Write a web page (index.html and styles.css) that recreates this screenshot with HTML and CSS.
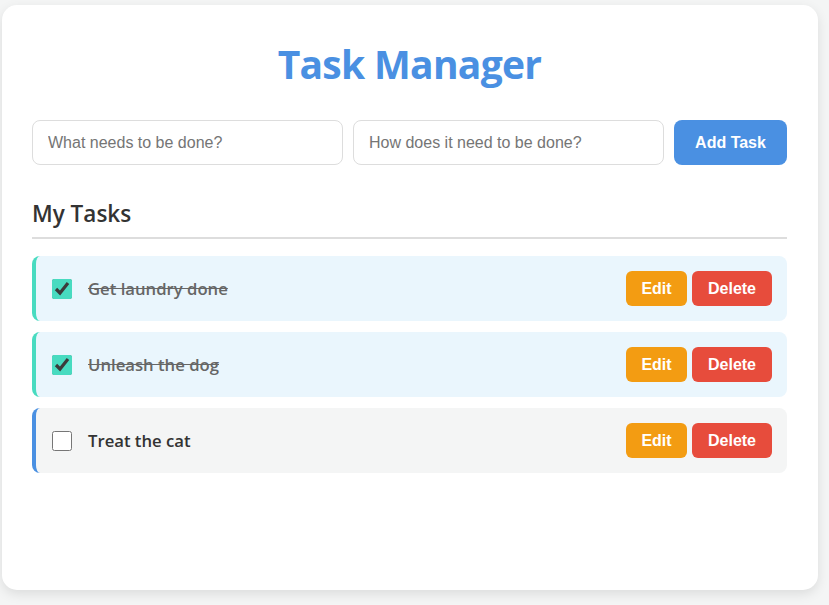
FILE: index.html
```html
<!DOCTYPE html>
<html lang="en">
<head>
<meta charset="utf-8">
<title>Task Manager</title>
<link rel="stylesheet" href="styles.css">
</head>
<body>
<div class="card">
  <h1 class="title">Task Manager</h1>
  <form class="add-form">
    <input class="field" type="text" placeholder="What needs to be done?">
    <input class="field" type="text" placeholder="How does it need to be done?">
    <button class="add-btn" type="button">Add Task</button>
  </form>
  <h2 class="section-title">My Tasks</h2>
  <ul class="task-list">
    <li class="task done">
      <input class="check" type="checkbox" checked>
      <span class="task-text">Get laundry done</span>
      <div class="actions"><button class="btn edit" type="button">Edit</button><button class="btn delete" type="button">Delete</button></div>
    </li>
    <li class="task done">
      <input class="check" type="checkbox" checked>
      <span class="task-text">Unleash the dog</span>
      <div class="actions"><button class="btn edit" type="button">Edit</button><button class="btn delete" type="button">Delete</button></div>
    </li>
    <li class="task">
      <input class="check" type="checkbox">
      <span class="task-text">Treat the cat</span>
      <div class="actions"><button class="btn edit" type="button">Edit</button><button class="btn delete" type="button">Delete</button></div>
    </li>
  </ul>
</div>
</body>
</html>
```
FILE: styles.css
```css
html, body {
  margin: 0;
  padding: 0;
  background: #f4f5f5;
}
body {
  padding: 5px 11px 15px 2px;
}
.card {
  width: 816px;
  height: 585px;
  box-sizing: border-box;
  background: #fff;
  border-radius: 15px;
  box-shadow: 0 4px 12px rgba(0, 0, 0, 0.1);
  padding: 30px 31px 30px 30px;
  font-family: "Open Sans", "Noto Sans", sans-serif;
  color: #333;
}
.title {
  margin: 1px 0 28px;
  text-align: center;
  font-size: 39px;
  line-height: 56px;
  font-weight: 700;
  color: #4a90e2;
  letter-spacing: -0.7px;
}
.add-form {
  display: flex;
  gap: 10px;
  margin: 0;
}
.field {
  flex: 1;
  height: 45px;
  box-sizing: border-box;
  border: 1px solid #ddd;
  border-radius: 8px;
  padding: 0 15px;
  font-family: "Liberation Sans", Arial, sans-serif;
  font-size: 16px;
  color: #333;
  outline: none;
}
.field::placeholder {
  color: #757575;
}
.add-btn {
  width: 113px;
  height: 45px;
  border: none;
  border-radius: 8px;
  background: #4a90e2;
  color: #fff;
  font-family: "Liberation Sans", Arial, sans-serif;
  font-size: 16px;
  font-weight: 700;
}
.section-title {
  margin: 34px 0 17px;
  padding-bottom: 8px;
  border-bottom: 2px solid #ddd;
  font-size: 22.5px;
  line-height: 30px;
  font-weight: 600;
  color: #333;
}
.task-list {
  list-style: none;
  margin: 0;
  padding: 0;
  display: flex;
  flex-direction: column;
  gap: 11px;
}
.task {
  display: flex;
  align-items: center;
  height: 65px;
  box-sizing: border-box;
  padding: 0 15px 0 16px;
  border-left: 4px solid #4a90e2;
  border-radius: 8px;
  background: #f4f5f5;
}
.task.done {
  border-left-color: #48dbc0;
  background: #eaf6fd;
}
.check {
  width: 20px;
  height: 20px;
  margin: 0 16px 0 0;
  accent-color: #48dbc0;
}
.task-text {
  flex: 1;
  font-size: 16.7px;
  font-weight: 600;
  color: #333;
}
.task.done .task-text {
  text-decoration: line-through;
  color: #666;
}
.actions {
  display: flex;
  gap: 5px;
}
.btn {
  height: 35px;
  border: none;
  border-radius: 6px;
  color: #fff;
  font-family: "Liberation Sans", Arial, sans-serif;
  font-size: 16px;
  font-weight: 700;
  padding: 0;
}
.btn.edit {
  width: 61px;
  background: #f39c12;
}
.btn.delete {
  width: 80px;
  background: #e74c3c;
}
```
